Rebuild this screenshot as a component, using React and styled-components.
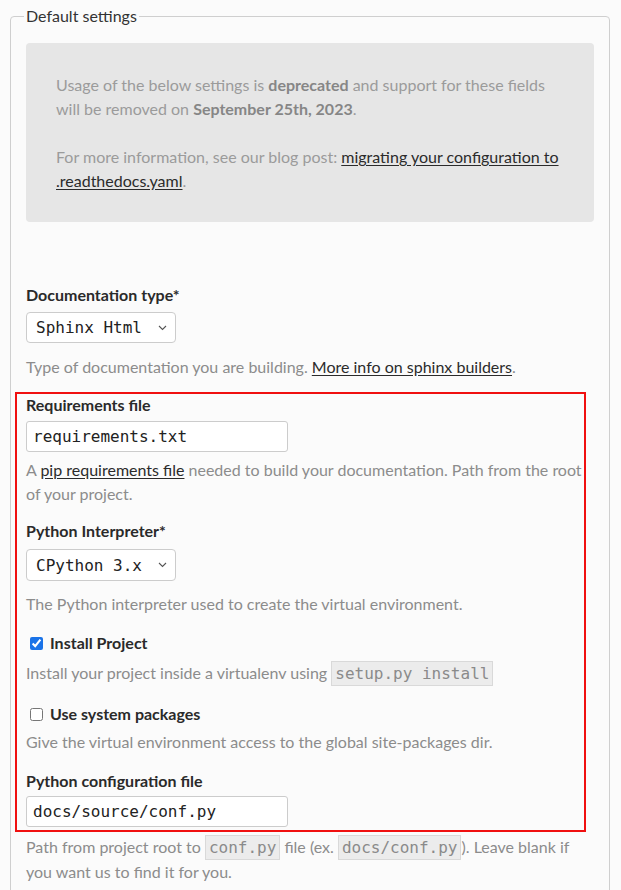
import React from "react";
import styled, { createGlobalStyle } from "styled-components";

const GlobalStyle = createGlobalStyle`
  html, body {
    margin: 0;
    padding: 0;
    background: #fbfbfb;
  }
  body {
    font-family: Lato, "Open Sans", sans-serif;
    font-size: 16px;
    line-height: 24px;
    color: #333;
  }
`;

const Page = styled.div`
  padding: 4px 0 0 10px;
  width: 600px;
  height: 886px;
  overflow: hidden;
`;

const Fieldset = styled.fieldset`
  margin: 0;
  padding: 0 15px 40px;
  border: 1px solid #cfcfcf;
  border-radius: 4px;
  min-height: 900px;
`;

const Legend = styled.legend`
  padding: 0 2px;
  margin-left: -2px;
  line-height: 24px;
  color: #333;
`;

const Notice = styled.div`
  margin-top: 15px;
  padding: 30px 30px 29px;
  background: #e6e6e6;
  border-radius: 4px;
  color: #9b9b9b;
  display: flex;
  flex-direction: column;
  gap: 24px;

  p {
    margin: 0;
  }
  strong {
    color: #868686;
    font-weight: 700;
  }
`;

const DarkLink = styled.a`
  color: #2b2b2b;
  text-decoration: underline;
  text-underline-offset: 2px;
`;

const Field = styled.div`
  margin-top: ${(p) => p.$mt || 0}px;
`;

const Label = styled.div`
  font-weight: 700;
  color: #2a2a2a;
  line-height: 24px;
  margin-top: ${(p) => p.$mt || 0}px;
`;

const TextInput = styled.input`
  display: block;
  box-sizing: border-box;
  margin: ${(p) => p.$mt || 4}px 0 0;
  width: 262px;
  height: 31px;
  padding: 0 6px;
  border: 1px solid #cccccc;
  border-radius: 3px;
  background: #fff;
  font-family: "DejaVu Sans Mono", "Liberation Mono", monospace;
  font-size: 16px;
  color: #222;
  outline: none;
`;

const SelectBox = styled.div`
  position: relative;
  width: 150px;
  height: ${(p) => p.$h || 31}px;
  margin-top: ${(p) => p.$mt || 5}px;
`;

const NativeSelect = styled.select`
  appearance: none;
  -webkit-appearance: none;
  box-sizing: border-box;
  width: 100%;
  height: 100%;
  margin: 0;
  padding: 0 0 0 9px;
  border: 1px solid #cccccc;
  border-radius: 4px;
  background: #fff;
  font-family: "DejaVu Sans Mono", "Liberation Mono", monospace;
  font-size: 16px;
  color: #222;
  outline: none;
`;

const Chevron = styled.svg`
  position: absolute;
  right: 9px;
  top: 50%;
  margin-top: -3px;
  pointer-events: none;
`;

const Help = styled.p`
  margin: ${(p) => p.$mt || 0}px 0 0;
  color: #8c8c8c;
  line-height: 24px;
`;

const Code = styled.code`
  font-family: "DejaVu Sans Mono", "Liberation Mono", monospace;
  font-size: 16px;
  color: #8a8a8a;
  background: #ececec;
  border: 1px solid #d9d9d9;
  padding: 2px 3px;
  line-height: 24px;
`;

const CheckRow = styled.label`
  display: flex;
  align-items: center;
  font-weight: 700;
  color: #2a2a2a;
  line-height: 24px;
  margin-top: ${(p) => p.$mt || 0}px;
`;

const Check = styled.input`
  width: 13px;
  height: 13px;
  margin: 0 7px 0 4px;
  accent-color: #1a73e8;
`;

const Highlight = styled.div`
  position: relative;
  margin-top: 14px;
`;

const RedBox = styled.div`
  position: absolute;
  top: -1px;
  left: -11px;
  right: 8px;
  bottom: -5px;
  border: 2px solid #f01010;
  pointer-events: none;
`;

function Select({ value, mt, h }) {
  return (
    <SelectBox $mt={mt} $h={h}>
      <NativeSelect defaultValue={value}>
        <option>{value}</option>
      </NativeSelect>
      <Chevron width="9" height="6" viewBox="0 0 9 6">
        <path d="M1 1l3.5 3.5L8 1" fill="none" stroke="#555" strokeWidth="1.1" />
      </Chevron>
    </SelectBox>
  );
}

export default function App() {
  return (
    <Page>
      <GlobalStyle />
      <Fieldset>
        <Legend>Default settings</Legend>
        <Notice>
          <p>
            Usage of the below settings is <strong>deprecated</strong> and support for these fields
            will be removed on <strong>September 25th, 2023</strong>.
          </p>
          <p>
            For more information, see our blog post:{" "}
            <DarkLink>migrating your configuration to .readthedocs.yaml</DarkLink>.
          </p>
        </Notice>

        <Field $mt={61}>
          <Label>Documentation type*</Label>
          <Select value="Sphinx Html" />
          <Help $mt={12}>
            Type of documentation you are building. <DarkLink>More info on sphinx builders</DarkLink>.
          </Help>
        </Field>

        <Highlight>
          <Label>Requirements file</Label>
          <TextInput defaultValue="requirements.txt" />
          <Help $mt={6}>
            A <DarkLink>pip requirements file</DarkLink> needed to build your documentation. Path from the root
            of your project.
          </Help>

          <Label $mt={13}>Python Interpreter*</Label>
          <Select value="CPython 3.x" mt={6} h={32} />
          <Help $mt={11}>The Python interpreter used to create the virtual environment.</Help>

          <CheckRow $mt={15}>
            <Check type="checkbox" defaultChecked />
            Install Project
          </CheckRow>
          <Help $mt={6}>
            Install your project inside a virtualenv using <Code>setup.py install</Code>
          </Help>

          <CheckRow $mt={16}>
            <Check type="checkbox" />
            Use system packages
          </CheckRow>
          <Help $mt={4}>Give the virtual environment access to the global site-packages dir.</Help>

          <Label $mt={15}>Python configuration file</Label>
          <TextInput defaultValue="docs/source/conf.py" $mt={3} />
          <RedBox />
        </Highlight>

        <Help $mt={8}>
          Path from project root to <Code>conf.py</Code> file (ex. <Code>docs/conf.py</Code>). Leave blank if
          you want us to find it for you.
        </Help>
      </Fieldset>
    </Page>
  );
}
